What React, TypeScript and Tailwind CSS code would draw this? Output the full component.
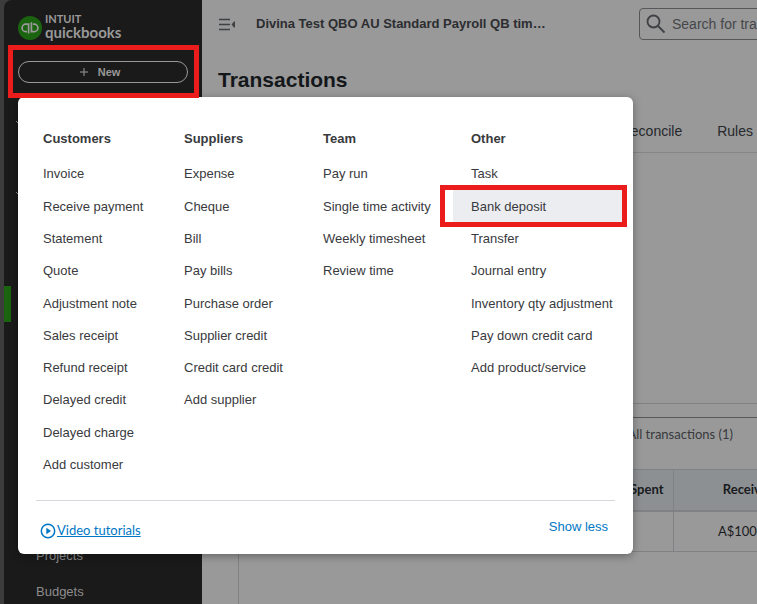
import React from "react";

const menuColumns = [
  {
    title: "Customers",
    items: [
      "Invoice",
      "Receive payment",
      "Statement",
      "Quote",
      "Adjustment note",
      "Sales receipt",
      "Refund receipt",
      "Delayed credit",
      "Delayed charge",
      "Add customer",
    ],
  },
  {
    title: "Suppliers",
    items: [
      "Expense",
      "Cheque",
      "Bill",
      "Pay bills",
      "Purchase order",
      "Supplier credit",
      "Credit card credit",
      "Add supplier",
    ],
  },
  {
    title: "Team",
    items: ["Pay run", "Single time activity", "Weekly timesheet", "Review time"],
  },
  {
    title: "Other",
    items: [
      "Task",
      "Bank deposit",
      "Transfer",
      "Journal entry",
      "Inventory qty adjustment",
      "Pay down credit card",
      "Add product/service",
    ],
  },
];

const activeItem = "Bank deposit";

const Logo = () => (
  <div className="flex items-end gap-[3px] pl-3.5 text-[#999999]">
    <svg className="h-6 w-6 shrink-0" viewBox="0 0 24 24" fill="none" aria-hidden="true">
      <circle cx="12" cy="12" r="12" fill="#1a6410" />
      <path
        d="M10.6 17.6V8.2H7.8a3.7 3.7 0 0 0 0 7.4h1.2M13.4 6.2v9.4h2.8a3.7 3.7 0 0 0 0-7.4h-1.2"
        stroke="#999999"
        strokeWidth="1.7"
      />
    </svg>
    <div className="font-['Lato',sans-serif]">
      <div className="text-[11px] font-bold leading-[13px]">INTUIT</div>
      <div className="text-[15px] font-bold leading-[15px]">quickbooks</div>
    </div>
  </div>
);

const Caret = () => (
  <svg className="h-2 w-2" viewBox="0 0 8 8" fill="none" stroke="#8a8a8a" aria-hidden="true">
    <path d="M1 2l3 3 3-3" />
  </svg>
);

const Sidebar = () => (
  <aside className="w-[198px] shrink-0 overflow-hidden rounded-tl-lg bg-[#1a1a1a] pt-3">
    <Logo />
    <div className="mt-[21px] px-3.5">
      <button
        type="button"
        className="flex h-[22px] w-full items-center justify-center gap-2.5 rounded-full border border-[#999999] pr-1.5 text-[11px] font-bold text-[#999999]"
      >
        <svg className="h-2 w-2" viewBox="0 0 8 8" stroke="currentColor" aria-hidden="true">
          <path d="M4 0v8M0 4h8" />
        </svg>
        New
      </button>
    </div>
    <nav className="pt-9 text-[13px] text-[#8c8c8c]">
      <div className="flex h-[71px] pl-[11px]">
        <Caret />
      </div>
      <div className="flex h-24 pl-[11px]">
        <Caret />
      </div>
      <div className="h-9 w-[7px] bg-[#1a6410]" />
      <div className="mt-[216px] flex flex-col pl-8">
        <a href="#projects" className="leading-9">
          Projects
        </a>
        <a href="#budgets" className="leading-9">
          Budgets
        </a>
      </div>
    </nav>
  </aside>
);

const Header = () => (
  <header className="flex h-12 shrink-0 items-center pl-4">
    <button type="button" aria-label="Collapse navigation" className="text-[#3f4144]">
      <svg className="h-4 w-[18px]" viewBox="0 0 18 16" aria-hidden="true">
        <path d="M1 3.5h11M1 8.5h11M1 13.5h11" stroke="currentColor" strokeWidth="1.5" />
        <path d="M17 5.5v6h-1l-2.5-3 2.5-3z" fill="currentColor" />
      </svg>
    </button>
    <h2 className="ml-5 whitespace-nowrap text-[13px] font-bold text-[#2c2d30]">
      Divina Test QBO AU Standard Payroll QB tim…
    </h2>
    <label className="ml-auto mr-[-100px] flex h-8 w-[218px] shrink-0 items-center rounded border border-[#55575b] pl-1.5">
      <svg className="h-5 w-5 shrink-0 text-[#3f4144]" viewBox="0 0 20 20" fill="none" stroke="currentColor" strokeWidth="1.8" aria-hidden="true">
        <circle cx="7.5" cy="7.5" r="6" />
        <path d="M12 12l6.5 6.5" />
      </svg>
      <input
        type="search"
        aria-label="Search"
        placeholder="Search for transactions"
        className="ml-1.5 w-full min-w-0 bg-transparent text-[14px] placeholder:text-[#45474b]"
      />
    </label>
  </header>
);

const Main = () => (
  <main className="flex min-w-0 flex-1 flex-col overflow-hidden bg-[#999999]">
    <Header />
    <h1 className="mt-4 pl-4 text-[21px] font-bold leading-8 text-[#14171a]">Transactions</h1>
    <div className="mt-[14px] flex h-[43px] shrink-0 items-center justify-end gap-[35px] border-b border-[#858688] pr-1 text-[14px] text-[#26282b]">
      <a href="#reconcile">Reconcile</a>
      <a href="#rules">Rules</a>
    </div>
    <div className="h-[251px] shrink-0 border-b border-[#808184]" />
    <section className="ml-9 mt-[13px] flex-1 border-l border-t border-l-[#808184] border-t-[#55575b] font-['Lato',sans-serif]">
      <div className="flex h-[51px] items-start justify-end pr-6 pt-1.5 text-[13px] leading-5 text-[#37393d]">
        <a href="#all">All transactions (1)</a>
      </div>
      <table className="w-[calc(100%_+_26px)] table-fixed border-collapse text-[13px] text-[#191b1e]">
        <thead>
          <tr className="h-[41px] border-b-2 border-t border-b-[#808184] border-t-[#808184] bg-[#8d9092]">
            <th className="border-r border-[#808184] pr-[9px] text-right font-bold">Spent</th>
            <th className="w-[110px] pr-2 text-right font-bold">Received</th>
          </tr>
        </thead>
        <tbody>
          <tr className="h-[41px] border-b border-[#808184]">
            <td className="border-r border-[#808184]" />
            <td className="pr-2 text-right">A$100.00</td>
          </tr>
        </tbody>
      </table>
    </section>
  </main>
);

const NewMenu = () => (
  <div
    role="dialog"
    aria-label="New"
    className="absolute left-[18px] top-[97px] w-[615px] rounded-md bg-white text-[13px] text-[#393a3d] shadow-[0_2px_8px_rgba(0,0,0,0.35)]"
  >
    <div className="grid grid-cols-[141px_139px_148px_1fr] pl-[7px] pr-[11px] pt-[30px]">
      {menuColumns.map((column) => (
        <div key={column.title}>
          <h3 className="pl-[18px] font-bold leading-6">{column.title}</h3>
          <ul className="mt-[7px] grid h-[323px] grid-rows-10">
            {column.items.map((item) => (
              <li key={item} className="relative flex">
                <a
                  href="#"
                  className={`flex flex-1 items-center whitespace-nowrap pl-[18px] ${
                    item === activeItem ? "bg-[#ecedf1]" : ""
                  }`}
                >
                  {item}
                </a>
                {item === activeItem && (
                  <span className="pointer-events-none absolute -bottom-1 -left-[13px] -right-[5px] -top-[5px] border-[5px] border-[#ea1c1c]" />
                )}
              </li>
            ))}
          </ul>
        </div>
      ))}
    </div>
    <div className="mx-[18px] mt-[19px] flex h-[54px] justify-between border-t border-[#d4d7dc] pl-1 pr-[7px] text-[#0077c5]">
      <a href="#tutorials" className="flex items-center pt-1.5 font-['Lato',sans-serif]">
        <svg className="mr-px h-4 w-4" viewBox="0 0 16 16" fill="none" aria-hidden="true">
          <circle cx="8" cy="8" r="6.7" stroke="currentColor" strokeWidth="1.5" />
          <path d="M6.3 4.8v6.4L11 8z" fill="currentColor" />
        </svg>
        <span className="underline">Video tutorials</span>
      </a>
      <button type="button" className="pb-0.5">
        Show less
      </button>
    </div>
  </div>
);

const App = () => (
  <div className="relative flex h-screen overflow-hidden bg-[#3c3c3c] pl-1 font-['Liberation_Sans',Arial,sans-serif]">
    <Sidebar />
    <Main />
    <NewMenu />
    <span className="pointer-events-none absolute left-2 top-[45px] h-[53px] w-[191px] border-[5px] border-[#ea1c1c]" />
  </div>
);

export default App;
